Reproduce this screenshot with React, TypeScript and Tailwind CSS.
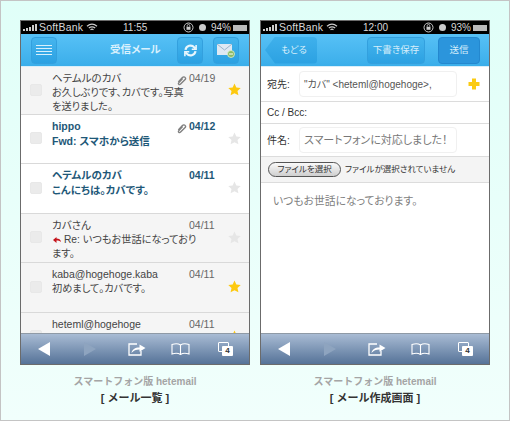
import React from "react";

const SANS = "font-['Liberation_Sans','Noto_Sans_CJK_JP',sans-serif] [font-feature-settings:'palt']";

function Star({ on }: { on: boolean }) {
  return (
    <svg width="13" height="13" viewBox="0 0 24 24" className="shrink-0">
      <path d="M12 1l3.400 7.400 8.100.9-6 5.500 1.700 8L12 18.700 4.800 22.800l1.700-8-6-5.500 8.100-.9z" fill={on ? "#fdc90f" : "#e6e6e6"} />
    </svg>
  );
}

function Clip() {
  return (
    <svg width="11" height="11" viewBox="0 0 12 12" className="shrink-0">
      <path d="M2.500 7.500l4.500-4.700c1-1 2.300-.9 2.900-.2.700.7.700 1.800-.2 2.700L5 9.900c-.7.7-1.500.7-2 .2-.5-.5-.5-1.300.2-2l4-4.200" fill="none" stroke="#7f7f7f" strokeWidth="1.500" />
    </svg>
  );
}

function StatusBar({ time, pct }: { time: string; pct: string }) {
  return (
    <div className="h-[13px] bg-black text-[#d8d8d8] text-[10px] leading-[13px] flex items-center pl-[2px] shrink-0">
      <div className="flex items-end gap-[1px] h-[7px] mr-[2px] shrink-0">
        <span className="w-[2px] h-[2px] bg-[#ccc]" />
        <span className="w-[2px] h-[3px] bg-[#ccc]" />
        <span className="w-[2px] h-[4px] bg-[#ccc]" />
        <span className="w-[2px] h-[6px] bg-[#ccc]" />
        <span className="w-[2px] h-[7px] bg-[#ccc]" />
      </div>
      <span className="w-[47px] shrink-0 text-[10.500px] tracking-[.2px]">SoftBank</span>
      <svg width="12" height="9" viewBox="0 0 12 9" className="shrink-0">
        <path d="M1 3.300C4 .700 8 .700 11 3.300M2.800 5C4.800 3.500 7.200 3.500 9.200 5M4.500 6.700C5.500 6 6.500 6 7.500 6.700" fill="none" stroke="#ccc" strokeWidth="1.200" />
      </svg>
      <span className="ml-[25px] w-[60px] shrink-0">{time}</span>
      <svg width="11" height="11" viewBox="0 0 11 11" className="shrink-0">
        <circle cx="5.500" cy="5.500" r="4.500" fill="none" stroke="#ccc" strokeWidth="1" />
        <rect x="3.500" y="4.800" width="4" height="3" fill="#ccc" />
        <path d="M4.200 4.800V3.800a1.300 1.300 0 012.600 0v1" fill="none" stroke="#ccc" strokeWidth=".8" />
      </svg>
      <span className="ml-[5px] w-[7px] h-[7px] rounded-full bg-[#ccc] shrink-0" />
      <span className="ml-[5px] w-[22px] shrink-0">{pct}</span>
      <span className="w-[14px] h-[6px] border border-[#bbb] bg-[#bbb] shrink-0" />
    </div>
  );
}

function Toolbar() {
  return (
    <div className="h-[31px] shrink-0 border-t border-[#8f9aa6] bg-gradient-to-b from-[#a9bcd4] to-[#567398] flex items-center pl-[17px]">
      <svg width="12" height="14" viewBox="0 0 12 14" className="shrink-0"><path d="M12 0v14L0 7z" fill="#fff" /></svg>
      <svg width="12" height="14" viewBox="0 0 12 14" className="ml-[34px] shrink-0"><path d="M0 0v14l12-7z" fill="#8ea4bf" /></svg>
      <svg width="18" height="13" viewBox="0 0 18 13" className="ml-[32px] shrink-0">
        <path d="M9 1H1v11h12V8" fill="none" stroke="#fff" strokeWidth="1.300" />
        <path d="M3.500 10c.5-3.500 3.500-5.500 8-5.500V1.500L17.500 5l-6 3.700V6.500c-3.500 0-6 1-8 3.500z" fill="#fff" />
      </svg>
      <svg width="19" height="12" viewBox="0 0 19 12" className="ml-[25px] shrink-0">
        <path d="M9.500 2C7.500.600 3.500.600 1 1.500V11c2.500-.8 6.500-.8 8.500.5 2-1.300 6-1.300 8.500-.5V1.500C15.500.600 11.500.600 9.500 2zM9.500 2v9.500" fill="none" stroke="#fff" strokeWidth="1.100" />
      </svg>
      <div className="relative w-[15px] h-[14px] ml-[28px] shrink-0">
        <span className="absolute left-0 top-0 w-[11px] h-[10px] border border-white rounded-[1px]" />
        <span className="absolute left-[4px] top-[4px] w-[11px] h-[10px] bg-white rounded-[1px] text-[8px] leading-[10px] font-bold text-center text-[#333]">4</span>
      </div>
    </div>
  );
}

type Row = { from: string; date: string; body: React.ReactNode; clip?: boolean; star?: boolean; unread?: boolean; grey?: boolean; h: string };

function MailRow({ r }: { r: Row }) {
  const color = r.unread ? "text-[#1e5878] font-bold" : "text-[#444]";
  return (
    <div className={`${r.h} shrink-0 flex items-center border-b border-[#d9d9d9] pl-[9px] pr-[8px] pb-[2px] ${r.grey ? "bg-[#f5f5f5]" : "bg-white"}`}>
      <span className="w-[12px] h-[12px] rounded-[2px] bg-[#ebebeb] border border-[#e8e8e8] shrink-0" />
      <div className={`ml-[10px] w-[163px] shrink-0 self-start pt-[4px] text-[10.500px] leading-[15px] ${color}`}>
        <div className="flex items-center h-[15px]">
          <span className="flex-1 truncate">{r.from}</span>
          {r.clip && <span className="mr-[2px] mt-[3px]"><Clip /></span>}
          <span className={`w-[26px] ${r.unread ? "" : "text-[#666]"}`}>{r.date}</span>
        </div>
        <div className={`leading-[14px] whitespace-nowrap ${r.unread ? "text-[10.500px]" : "text-[10.200px]"}`}>{r.body}</div>
      </div>
      <div className="ml-auto"><Star on={!!r.star} /></div>
    </div>
  );
}

const rows: Row[] = [
  { from: "ヘテムルのカバ", date: "04/19", clip: true, star: true, grey: true, h: "h-[48px]", body: <>お久しぶりです、カバです。写真<br />を送りました。</> },
  { from: "hippo", date: "04/12", clip: true, unread: true, h: "h-[49px]", body: "Fwd: スマホから送信" },
  { from: "ヘテムルのカバ", date: "04/11", unread: true, h: "h-[50px]", body: "こんにちは。カバです。" },
  { from: "カバさん", date: "04/11", grey: true, h: "h-[49px]", body: (
    <>
      <svg width="8" height="6" viewBox="0 0 8 6" className="inline mr-[3px] ml-[1px]"><path d="M0 3l3.500-3v1.600C6 1.600 7.500 2.500 8 5 6.500 3.800 5.500 3.500 3.500 3.500V6z" fill="#c5141c" /></svg>
      Re: いつもお世話になっており<br />ます。
    </>
  ) },
  { from: "kaba@hogehoge.kaba", date: "04/11", star: true, grey: true, h: "h-[50px]", body: "初めまして。カバです。" },
];

function HeadBtn({ children, w = "w-[26px]", cls = "" }: { children: React.ReactNode; w?: string; cls?: string }) {
  return (
    <div className={`${w} h-[27px] shrink-0 rounded-[4px] border border-[#33a0de] bg-gradient-to-b from-[#45b5ee] to-[#2ba1e2] flex items-center justify-center text-[#d5eefb] text-[9.500px] ${cls}`}>
      {children}
    </div>
  );
}

function Phone({ children, time, pct }: { children: React.ReactNode; time: string; pct: string }) {
  return (
    <div className="w-[230px] h-[345px] border border-[#6b6b6b] flex flex-col overflow-hidden bg-white">
      <StatusBar time={time} pct={pct} />
      {children}
      <Toolbar />
    </div>
  );
}

function Caption({ title }: { title: string }) {
  return (
    <div className="w-[230px] pt-[8px] text-center text-[10px] font-bold leading-[17px] [font-feature-settings:normal]">
      <div className="text-[#a5a5a5]">スマートフォン版 hetemail</div>
      <div className="text-[#333] text-[11px]">[ {title} ]</div>
    </div>
  );
}

function ListScreen() {
  return (
    <Phone time="11:55" pct="94%">
      <div className="h-[33px] shrink-0 bg-gradient-to-b from-[#57c1f6] to-[#3aaeea] flex items-center pl-[10px] border-b border-[#d8eefa]">
        <HeadBtn>
          <div className="w-[16px] flex flex-col gap-[1.500px]">
            <span className="h-[1.500px] bg-[#d8f0fc]" /><span className="h-[1.500px] bg-[#d8f0fc]" /><span className="h-[1.500px] bg-[#d8f0fc]" /><span className="h-[1.500px] bg-[#d8f0fc]" />
          </div>
        </HeadBtn>
        <div className="ml-[53px] w-[67px] shrink-0 text-[10.500px] font-bold text-[#d9f1fd] whitespace-nowrap">受信メール</div>
        <HeadBtn>
          <svg width="15" height="15" viewBox="0 0 24 24" fill="none" stroke="#e8f6fd" strokeWidth="3.500">
            <path d="M4 11a8 8 0 0 1 14-4l2 2M20 13a8 8 0 0 1-14 4l-2-2" />
            <path d="M21 3v7h-7M3 21v-7h7" strokeWidth="2.500" />
          </svg>
        </HeadBtn>
        <HeadBtn cls="ml-[10px]">
          <svg width="18" height="15" viewBox="0 0 18 15">
            <rect x="0" y="1" width="15" height="11" fill="#dfe9f3" />
            <path d="M0 1l7.500 6L15 1" fill="none" stroke="#9bb4cc" strokeWidth="1" />
            <circle cx="14" cy="11" r="3.500" fill="#8bbb66" stroke="#dff0d0" strokeWidth=".8" />
            <path d="M12 11h4" stroke="#fff" strokeWidth="1" />
          </svg>
        </HeadBtn>
      </div>
      <div className="flex-1 min-h-0 overflow-hidden flex flex-col">
        {rows.map((r, i) => <MailRow key={i} r={r} />)}
        <MailRow r={{ from: "heteml@hogehoge", date: "04/11", star: true, grey: true, h: "h-[49px]", body: "" }} />
      </div>
    </Phone>
  );
}

function FormRow({ label, value, h, cls = "" }: { label: string; value: string; h: string; cls?: string }) {
  return (
    <div className={`flex items-center ${h} pl-[6px] border-b border-[#dcdcdc] shrink-0`}>
      <span className="w-[32px] shrink-0 text-[10px] text-[#333]">{label}</span>
      <div className={`w-[158px] h-[26px] shrink-0 rounded-[4px] border border-[#f0f0f0] flex items-center pl-[4px] whitespace-nowrap ${cls}`}>{value}</div>
      <svg width="12" height="12" viewBox="0 0 12 12" className={label === "宛先:" ? "ml-[11px] shrink-0" : "hidden"}>
        <path d="M4 .500h4v3.500h3.500v4H8v3.500H4V8H.500V4H4z" fill="#fbcb12" />
      </svg>
    </div>
  );
}

function ComposeScreen() {
  return (
    <Phone time="12:00" pct="93%">
      <div className="h-[33px] shrink-0 bg-gradient-to-b from-[#57c1f6] to-[#3aaeea] flex items-center pl-[4px] border-b border-[#d8eefa]">
        <div className="w-[52px] h-[27px] shrink-0 flex items-center justify-center pl-[6px] text-[#d5eefb] text-[9.500px] rounded-r-[4px] bg-gradient-to-b from-[#3fb1ec] to-[#2ba1e2] [clip-path:polygon(10px_0,100%_0,100%_100%,10px_100%,0_50%)]">
          もどる
        </div>
        <HeadBtn w="w-[58px]" cls="ml-[50px]">下書き保存</HeadBtn>
        <HeadBtn w="w-[42px]" cls="ml-[13px] !bg-none bg-[#2b95dc] border-[#2488cf]">送信</HeadBtn>
      </div>
      <FormRow label="宛先:" h="h-[35px]" value={'"カバ" <heteml@hogehoge>,'} cls="text-[10px] text-[#555]" />
      <div className="h-[22px] shrink-0 flex items-center pl-[6px] border-b border-[#dcdcdc] text-[10px] text-[#333]">Cc / Bcc:</div>
      <FormRow label="件名:" h="h-[33px]" value="スマートフォンに対応しました！" cls="text-[11px] text-[#777]" />
      <div className="h-[26px] shrink-0 bg-[#f4f4f4] border-b border-[#dcdcdc] flex items-center pl-[7px] text-[8.500px] text-[#333]">
        <span className="w-[73px] h-[15px] shrink-0 rounded-full border border-[#555] bg-gradient-to-b from-[#fafafa] to-[#cfcfcf] text-center leading-[13px]">ファイルを選択</span>
        <span className="ml-[4px] text-[8.500px]">ファイルが選択されていません</span>
      </div>
      <div className="flex-1 min-h-0 pl-[12px] pt-[10px] text-[10.800px] text-[#808080]">いつもお世話になっております。</div>
    </Phone>
  );
}

export default function App() {
  return (
    <div className={`w-[510px] h-[421px] border border-[#c4c4c4] bg-gradient-to-b from-[#e0fff8] to-[#f1fffc] pl-[19px] pt-[19px] ${SANS}`}>
      <div className="flex gap-[10px]">
        <div><ListScreen /><Caption title="メール一覧" /></div>
        <div><ComposeScreen /><Caption title="メール作成画面" /></div>
      </div>
    </div>
  );
}
